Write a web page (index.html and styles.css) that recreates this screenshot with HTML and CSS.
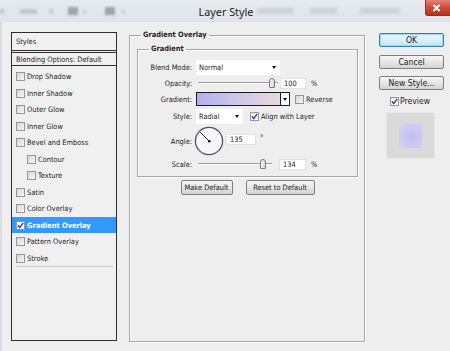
FILE: index.html
```html
<!DOCTYPE html>
<html>
<head>
<meta charset="utf-8">
<title>Layer Style</title>
<link rel="stylesheet" href="styles.css">
</head>
<body>
<div class="window">
  <header class="titlebar">
    <div class="blurs">
      <span class="blob b1"></span><span class="blob b2"></span><span class="blob b3"></span>
      <span class="blob dark b4"></span><span class="blob b5"></span><span class="blob dark b6"></span>
      <span class="blob b7"></span><span class="blob faint b8"></span><span class="blob faint b9"></span>
      <span class="blob faint b10"></span>
    </div>
    <div class="title">Layer Style</div>
    <div class="close"><svg width="9" height="8" viewBox="0 0 9 8"><path d="M1.5 1 L7.5 7 M7.5 1 L1.5 7" stroke="#fff" stroke-width="2"/></svg></div>
  </header>
  <main class="body">
    <nav class="styles-panel">
      <div class="panel-head">Styles</div>
      <div class="panel-blend">Blending Options: Default</div>
      <ul class="effect-list">
        <li class="effect"><span class="cb"></span>Drop Shadow</li>
        <li class="effect"><span class="cb"></span>Inner Shadow</li>
        <li class="effect"><span class="cb"></span>Outer Glow</li>
        <li class="effect"><span class="cb"></span>Inner Glow</li>
        <li class="effect"><span class="cb"></span>Bevel and Emboss</li>
        <li class="effect sub"><span class="cb"></span>Contour</li>
        <li class="effect sub"><span class="cb"></span>Texture</li>
        <li class="effect"><span class="cb"></span>Satin</li>
        <li class="effect"><span class="cb"></span>Color Overlay</li>
        <li class="effect active"><span class="cb checked"><svg width="7" height="7" viewBox="0 0 7 7"><path d="M1 3.3 L2.8 5.6 L6.2 0.8" fill="none" stroke="#23449a" stroke-width="1.4"/></svg></span>Gradient Overlay</li>
        <li class="effect"><span class="cb"></span>Pattern Overlay</li>
        <li class="effect"><span class="cb"></span>Stroke</li>
      </ul>
      <div class="panel-sep"></div>
    </nav>

    <fieldset class="group outer">
      <legend>Gradient Overlay</legend>
      <fieldset class="group inner">
        <legend>Gradient</legend>
        <div class="form">
          <span class="lbl">Blend Mode:</span>
          <div class="ctl"><div class="select sel-wide"><span>Normal</span><i class="arrow"></i></div></div>

          <span class="lbl">Opacity:</span>
          <div class="ctl">
            <div class="slider"><span class="track op-a"></span><span class="thumb"></span><span class="track op-b"></span></div>
            <div class="num num-op">100</div><span class="unit">%</span>
          </div>

          <span class="lbl">Gradient:</span>
          <div class="ctl">
            <div class="swatch"><span class="swatch-fill"></span><span class="swatch-drop"><i class="arrow"></i></span></div>
            <span class="cb cb-rev"></span><span>Reverse</span>
          </div>

          <span class="lbl">Style:</span>
          <div class="ctl">
            <div class="select sel-style"><span>Radial</span><i class="arrow"></i></div>
            <span class="cb cb-align checked"><svg width="7" height="7" viewBox="0 0 7 7"><path d="M1 3.3 L2.8 5.6 L6.2 0.8" fill="none" stroke="#23449a" stroke-width="1.4"/></svg></span><span>Align with Layer</span>
          </div>

          <span class="lbl">Angle:</span>
          <div class="ctl">
            <svg class="dial" width="30" height="30" viewBox="0 0 30 30"><circle cx="15" cy="15" r="13.6" fill="#f6f6f6" stroke="#46526e" stroke-width="1.3"/><path d="M15 15 L6.2 6.2" stroke="#222" stroke-width="1"/><circle cx="15.3" cy="15.3" r="1.3" fill="#111"/></svg>
            <div class="num num-angle">135</div><span class="deg">°</span>
          </div>

          <span class="lbl">Scale:</span>
          <div class="ctl">
            <div class="slider"><span class="track sc-a"></span><span class="thumb"></span><span class="track sc-b"></span></div>
            <div class="num num-scale">134</div><span class="unit">%</span>
          </div>
        </div>
      </fieldset>
      <div class="btn-row">
        <button class="btn btn-make">Make Default</button>
        <button class="btn btn-reset">Reset to Default</button>
      </div>
    </fieldset>

    <aside class="actions">
      <button class="abtn ok">OK</button>
      <button class="abtn cancel">Cancel</button>
      <button class="abtn newstyle">New Style...</button>
      <div class="preview-row"><span class="cb checked"><svg width="7" height="7" viewBox="0 0 7 7"><path d="M1 3.3 L2.8 5.6 L6.2 0.8" fill="none" stroke="#23449a" stroke-width="1.4"/></svg></span><span>Preview</span></div>
      <div class="preview"><span class="preview-fill"></span></div>
    </aside>
  </main>
</div>
</body>
</html>
```
FILE: styles.css
```css
* { box-sizing: border-box; margin: 0; padding: 0; }

html, body {
  width: 450px;
  height: 351px;
  overflow: hidden;
  background: #eeeeee;
}

body {
  font-family: "DejaVu Sans Condensed", "DejaVu Sans", sans-serif;
  font-stretch: condensed;
  font-size: 7.4px;
  color: #1f2126;
}

.window {
  width: 450px;
  height: 351px;
  display: flex;
  flex-direction: column;
}

/* ---------- title bar ---------- */
.titlebar {
  height: 22px;
  flex: none;
  display: grid;
  grid-template-columns: 1fr 25px;
  background: linear-gradient(#e7ebf0, #dde3e9);
}

.blurs {
  grid-area: 1 / 1 / 2 / 2;
  display: flex;
  align-items: center;
  filter: blur(1.2px);
}

.blob { flex: none; height: 5px; background: #c2c8cf; }
.blob.dark { height: 8px; background: #9fa5ad; }
.blob.faint { background: #cfd4da; height: 6px; }
.b1 { width: 4px; }
.b2 { margin-left: 16px; width: 17px; }
.b3 { margin-left: 13px; width: 3px; }
.b4 { margin-left: 15px; width: 10px; }
.b5 { margin-left: 5px; width: 3px; height: 3px; }
.b6 { margin-left: 19px; width: 10px; }
.b7 { margin-left: 7px; width: 3px; height: 3px; }
.b8 { margin-left: 132px; width: 36px; }
.b9 { margin-left: 17px; width: 27px; }
.b10 { margin-left: 23px; width: 40px; }

.title {
  grid-area: 1 / 1 / 2 / 3;
  justify-self: center;
  align-self: center;
  font-family: "Noto Sans", "Open Sans", sans-serif;
  font-size: 10.8px;
  color: #222;
  padding-left: 2px;
}

.close {
  grid-area: 1 / 2 / 2 / 3;
  height: 16px;
  align-self: start;
  display: flex;
  align-items: center;
  justify-content: center;
  padding-right: 3px;
  background: linear-gradient(#e48376, #cc4a3b 50%, #b8311f);
  border-left: 1px solid #9a2d22;
  border-bottom: 1px solid #9a2d22;
  border-radius: 0 0 0 3px;
}

/* ---------- body ---------- */
.body {
  flex: 1;
  display: flex;
  align-items: flex-start;
  padding: 10px 0 0 9px;
  border-left: 2px solid #d9dde2;
}

/* ---------- styles list ---------- */
.styles-panel {
  width: 106px;
  height: 309px;
  border: 1px solid #2e2e2e;
  background: #f0f0f0;
  display: flex;
  flex-direction: column;
  flex: none;
}

.panel-head {
  height: 18px;
  border-bottom: 1px solid #2e2e2e;
  padding-left: 4px;
  display: flex;
  align-items: center;
}

.panel-blend {
  height: 14px;
  margin-top: 1px;
  border-top: 1px solid #2e2e2e;
  border-bottom: 1px solid #2e2e2e;
  padding-left: 4px;
  display: flex;
  align-items: center;
}

.effect-list {
  list-style: none;
  padding-top: 2.4px;
}

.effect {
  height: 16.5px;
  display: flex;
  align-items: center;
  padding-left: 4px;
}

.effect.sub { padding-left: 15px; }

.effect.active {
  background: #3399ff;
  color: #fff;
  font-weight: bold;
}

.panel-sep {
  margin: 0 3px 0 4px;
  border-top: 1px solid #cdcdcd;
}

/* ---------- checkbox ---------- */
.cb {
  width: 9px;
  height: 9px;
  flex: none;
  margin-right: 2px;
  border: 1px solid #959595;
  background: linear-gradient(135deg, #d6d6d6, #f7f7f7);
  display: flex;
  align-items: center;
  justify-content: center;
}

.cb.checked { background: #fbfbfb; }

/* ---------- group boxes ---------- */
.group {
  border: 1px solid #a6a6a6;
  box-shadow: inset 1px 1px 0 #fff, 1px 1px 0 #fff;
  min-width: 0;
}

.group legend {
  font-weight: bold;
  line-height: 10px;
  padding: 0 2px;
}

.outer {
  flex: none;
  width: 236px;
  height: 312px;
  margin: -2px 0 0 12px;
  padding: 2px 6px 0 7px;
}

.outer > legend { margin-left: 4px; }

.inner {
  width: 221px;
  margin-top: 2px;
  padding: 5px 0 4px 0;
}

.inner > legend { margin-left: 11px; }

.form {
  display: grid;
  grid-template-columns: 54px 1fr;
  grid-template-rows: 16px 16px 16px 19px 30px 16px;
  column-gap: 4px;
  align-items: center;
}

.lbl { text-align: right; }

.ctl {
  display: flex;
  align-items: center;
  height: 100%;
}

/* select */
.select {
  height: 15px;
  background: #fff;
  display: flex;
  align-items: center;
  justify-content: space-between;
  padding: 0 4px 0 3px;
}

.sel-wide { width: 84px; }
.sel-style { width: 47px; margin-right: 7px; }

.arrow {
  width: 0;
  height: 0;
  border-left: 2.5px solid transparent;
  border-right: 2.5px solid transparent;
  border-top: 3px solid #111;
}

/* slider */
.slider {
  display: flex;
  align-items: center;
  margin-left: 2px;
  height: 10px;
}

.track {
  height: 2px;
  background: linear-gradient(#9c9c9c 50%, #ffffff 50%);
}

.op-a { width: 71px; }
.op-b { width: 3px; }
.sc-a { width: 62px; }
.sc-b { width: 6px; }

.thumb {
  width: 6px;
  height: 10px;
  border: 1px solid #7a7a7a;
  border-radius: 3px 3px 1px 1px;
  background: linear-gradient(90deg, #ffffff, #d5d5d5);
}

/* number fields */
.num {
  height: 11px;
  background: #fff;
  border: 1px solid #e3e3e3;
  padding-left: 3px;
  display: flex;
  align-items: center;
}

.num-op { width: 26px; margin-left: 2px; }
.num-scale { width: 27px; margin-left: 7px; }
.num-angle { width: 30px; margin-left: 2px; margin-bottom: 4px; }

.unit { margin-left: 5px; }

.deg {
  margin-left: 4px;
  margin-bottom: 7px;
}

.dial { margin-left: -2px; flex: none; }

/* gradient swatch */
.swatch {
  width: 94px;
  height: 14px;
  border: 1px solid #1c1c1c;
  display: flex;
  margin-right: 5px;
}

.swatch-fill {
  flex: 1;
  background: linear-gradient(90deg, #b3b0ea, #cdc5ea 45%, #e7d8de);
}

.swatch-drop {
  width: 9px;
  border-left: 1px solid #1c1c1c;
  background: #fff;
  display: flex;
  align-items: center;
  justify-content: center;
}

/* buttons */
.btn-row {
  display: flex;
  justify-content: center;
  gap: 13px;
  margin-top: 3px;
}

.btn, .abtn {
  font: inherit;
  color: #222;
  height: 15px;
  border: 1px solid #7f7f7f;
  border-radius: 2px;
  background: linear-gradient(#f6f6f6, #e6e6e6 50%, #d3d3d3);
  padding: 0;
}

.btn-make { width: 52px; }
.btn-reset { width: 69px; }

/* right column */
.actions {
  flex: none;
  width: 65px;
  margin: 1px 0 0 14px;
  display: flex;
  flex-direction: column;
  font-size: 8.6px;
}

.abtn {
  height: 14px;
  width: 65px;
  font-size: 8.6px;
}

.abtn.ok {
  border-color: #3c7fb1;
  background: linear-gradient(#eef8fe, #d9f0fc 50%, #bde4fa);
  box-shadow: inset 0 0 0 1px #9fd5f5;
}

.abtn.cancel { margin-top: 8px; }
.abtn.newstyle { margin-top: 7px; }

.preview-row {
  display: flex;
  align-items: center;
  height: 10px;
  margin-top: 6px;
  padding-left: 11px;
}

.preview-row .cb { margin-right: 1px; }

.preview {
  width: 49px;
  height: 47px;
  margin: 6px 0 0 7px;
  background: #dadada;
  border: 1px solid #e6e6e6;
  display: flex;
  align-items: center;
  justify-content: center;
}

.preview-fill {
  width: 23px;
  height: 25px;
  background: radial-gradient(circle at 55% 55%, #c3bdf0, #d1ccf0 65%, #dcd8ee);
}
```
